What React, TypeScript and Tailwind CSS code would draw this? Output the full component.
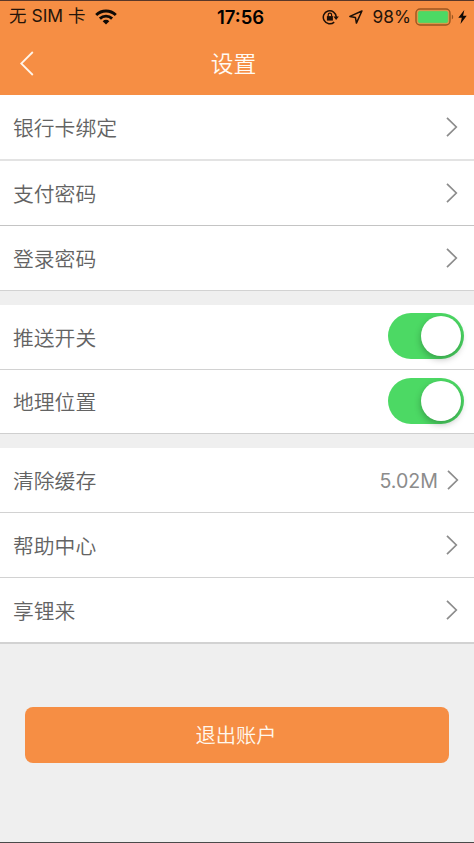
type RowProps = {
  label: string;
  value?: string;
  toggle?: boolean;
  className?: string;
};

function Switch() {
  return (
    <button
      role="switch"
      aria-checked="true"
      className="flex h-[46px] w-[76px] items-center justify-end rounded-full bg-[#4cd964] pr-[3px]"
    >
      <span className="h-10 w-10 rounded-full bg-white shadow-[0_3px_7px_rgba(0,0,0,0.28)]" />
    </button>
  );
}

function Chevron() {
  return (
    <svg width="12" height="20" viewBox="0 0 12 20" fill="none" stroke="#8c8c8c" strokeWidth="1.7">
      <path d="M1 .9 10.3 10 1 19.1" />
    </svg>
  );
}

function Row({ label, value, toggle, className = "h-[65px] border-b border-[#d2d2d2]" }: RowProps) {
  return (
    <div className={`flex items-center justify-between bg-white pl-[13px] ${className}`}>
      <span className="pt-[3px] text-[20.8px] leading-8 font-[350] text-[#636363]">{label}</span>
      {toggle ? (
        <div className="pr-2.5 pb-0.5">
          <Switch />
        </div>
      ) : (
        <div className={`flex items-center gap-[9px] ${value ? "pr-[15px]" : "pr-4 pb-px"}`}>
          {value && (
            <span className="pt-px font-[Inter] text-[19.6px] leading-8 text-[#8c8c8c]">{value}</span>
          )}
          <Chevron />
        </div>
      )}
    </div>
  );
}

function StatusBar() {
  return (
    <div className="grid h-[31px] grid-cols-3 items-center text-[17px] text-[#24140a]">
      <div className="flex items-center pl-[9px]">
        <span className="whitespace-nowrap font-[Inter,'Noto_Sans_CJK_SC',sans-serif] text-[17.5px]">
          无 SIM 卡
        </span>
        <svg className="ml-[9px]" width="22" height="16" viewBox="0 0 22 16" fill="none" stroke="#100a06" strokeWidth="2.9">
          <path d="M1.2 6A14 14 0 0 1 20.8 6" />
          <path d="M4.9 9.6a8.8 8.8 0 0 1 12.2 0" />
          <path d="M11 15.5 7.7 12.2a4.7 4.7 0 0 1 6.6 0Z" fill="#100a06" stroke="none" />
        </svg>
      </div>
      <div className="pl-[7px] text-center font-[Inter] text-[18.5px] leading-6 font-semibold text-black">17:56</div>
      <div className="flex items-center justify-end pr-[7px]">
        {/* rotation lock */}
        <svg width="17" height="16" viewBox="0 0 17 16" fill="none" stroke="#1c0f07" strokeWidth="1.5">
          <path d="M12.2 13.1A6.5 6.5 0 1 1 14.3 8" />
          <path d="M11.4 7.5h5.4l-2.7 3.4Z" fill="#1c0f07" stroke="none" />
          <path d="M4.9 7.1h6v4.5h-6Z" fill="#1c0f07" stroke="none" />
          <path d="M6.2 7.4V5.8a1.7 1.7 0 0 1 3.4 0v1.6" strokeWidth="1.2" />
        </svg>
        <svg className="ml-[10px]" width="14" height="14" viewBox="0 0 14 14" fill="none" stroke="#1c0f07" strokeWidth="1.5" strokeLinejoin="round">
          <path d="M12.9 1 .9 6.4l5.5 1 1 5.7Z" />
        </svg>
        <span className="ml-[10px] font-[Inter] text-[17.3px]">98%</span>
        <svg className="ml-1" width="39" height="18" viewBox="0 0 39 18">
          <rect x="1" y="1" width="34" height="16" rx="4" fill="none" stroke="#9b561f" strokeWidth="1.4" />
          <rect x="2.7" y="2.7" width="30.6" height="12.6" rx="2" fill="#4cd964" stroke="#d79a4c" strokeWidth=".8" />
          <path d="M36.8 6.5c1.9.9 1.9 4.1 0 5Z" fill="#9b561f" />
        </svg>
        <svg className="ml-1" width="9" height="14" viewBox="0 0 9 14" fill="#100a06">
          <path d="M6.3 0 .3 7.8h3.5L2.5 14l6.2-8.3H5.1Z" />
        </svg>
      </div>
    </div>
  );
}

function App() {
  return (
    <div className="flex h-[843px] w-[474px] flex-col border-t border-b border-t-[#593728] border-b-[#4a4a4a] bg-[#efefef] font-['Liberation_Sans','Noto_Sans_CJK_SC',sans-serif]">
      <header className="h-[94px] bg-[#f68e44]">
        <StatusBar />
        <div className="grid h-[63px] grid-cols-3 items-center">
          <svg className="ml-5" width="14" height="25" viewBox="0 0 14 25" fill="none" stroke="#fff5ea" strokeWidth="1.8">
            <path d="M12.8 1 1.2 12.5 12.8 24" />
          </svg>
          <h1 className="pt-0.5 pr-[7px] text-center text-[22.8px] font-[350] text-[#fffaf4]">设置</h1>
        </div>
      </header>
      <Row label="银行卡绑定" className="h-[66px] border-b-2 border-[#e3e3e3]" />
      <Row label="支付密码" className="h-[65px] border-b border-[#c4c4c4]" />
      <Row label="登录密码" />
      <div className="mt-3.5">
        <Row label="推送开关" toggle />
        <Row label="地理位置" toggle className="h-[64px] border-b border-[#cfcfcf]" />
      </div>
      <div className="mt-3.5">
        <Row label="清除缓存" value="5.02M" />
        <Row label="帮助中心" />
        <Row label="享锂来" className="h-[66px] border-b-2 border-[#d2d2d2]" />
      </div>
      <button className="mx-[25px] mt-[63px] h-[56px] rounded-lg bg-[#f68e44] pt-0.5 pr-0.5 text-[20.3px] font-[350] text-[#fff8ee]">
        退出账户
      </button>
    </div>
  );
}

export default App;
